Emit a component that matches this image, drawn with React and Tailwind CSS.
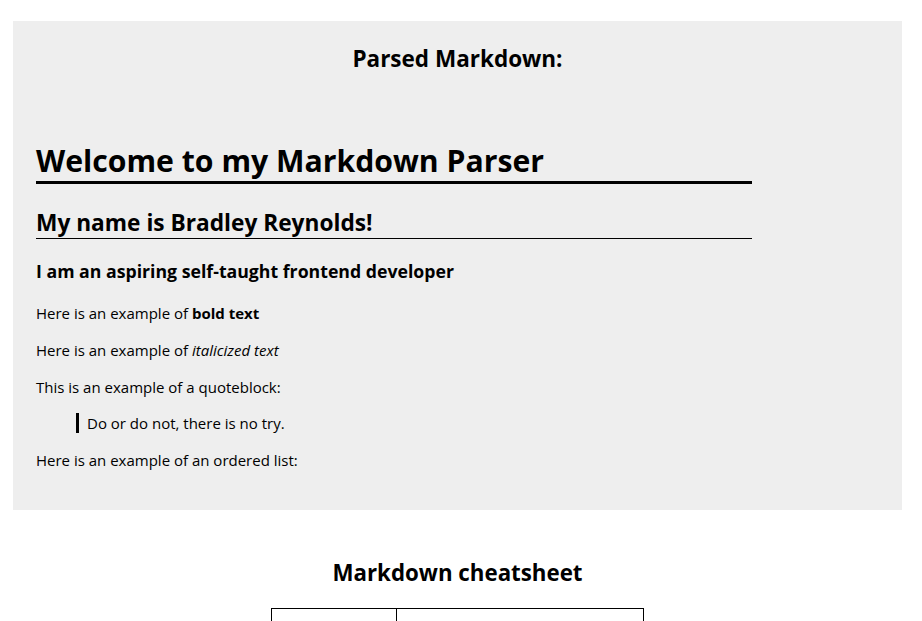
import React from "react";

export default function App() {
  return (
    <div className="min-h-[621px] bg-white text-black font-['Open_Sans',sans-serif]">
      <div className="ml-[13px] mr-[20px] pt-[21px]">
        <div className="bg-[#eeeeee] pt-[22px] pb-[39px] pl-[23px]">
          <h2 className="text-center text-[22.5px] leading-[32px] font-bold -ml-[23px]">Parsed Markdown:</h2>
          <div className="w-[716px]">
            <h1 className="mt-[66px] text-[30.2px] leading-[40px] font-bold border-b-[3px] border-black">
              Welcome to my Markdown Parser
            </h1>
            <h2 className="mt-[24px] text-[22.7px] leading-[30px] font-bold border-b border-black">
              My name is Bradley Reynolds!
            </h2>
            <h3 className="mt-[20px] text-[17.7px] leading-[24px] font-bold">
              I am an aspiring self-taught frontend developer
            </h3>
            <p className="mt-[20px] text-[15px] leading-[21px]">
              Here is an example of <strong className="font-bold">bold text</strong>
            </p>
            <p className="mt-[15.8px] text-[15px] leading-[21px]">
              Here is an example of <em className="italic">italicized text</em>
            </p>
            <p className="mt-[15.8px] text-[15px] leading-[21px]">This is an example of a quoteblock:</p>
            <div className="mt-[15.8px] ml-[40px] flex items-start">
              <div className="w-[3px] h-[20px] bg-black" />
              <p className="pl-[8px] text-[15px] leading-[21px]">Do or do not, there is no try.</p>
            </div>
            <p className="mt-[15.8px] text-[15px] leading-[21px]">Here is an example of an ordered list:</p>
          </div>
        </div>
        <h2 className="mt-[47px] text-center text-[22.3px] leading-[32px] font-bold">Markdown cheatsheet</h2>
        <div className="mt-[19px] flex justify-center">
          <table className="border-collapse">
            <thead>
              <tr>
                <th className="w-[125px] border border-black px-[15px] py-[20px] text-[15px] font-bold">Element</th>
                <th className="w-[247px] border border-black px-[15px] py-[20px] text-[15px] font-bold">Markdown Syntax</th>
              </tr>
            </thead>
          </table>
        </div>
      </div>
    </div>
  );
}
